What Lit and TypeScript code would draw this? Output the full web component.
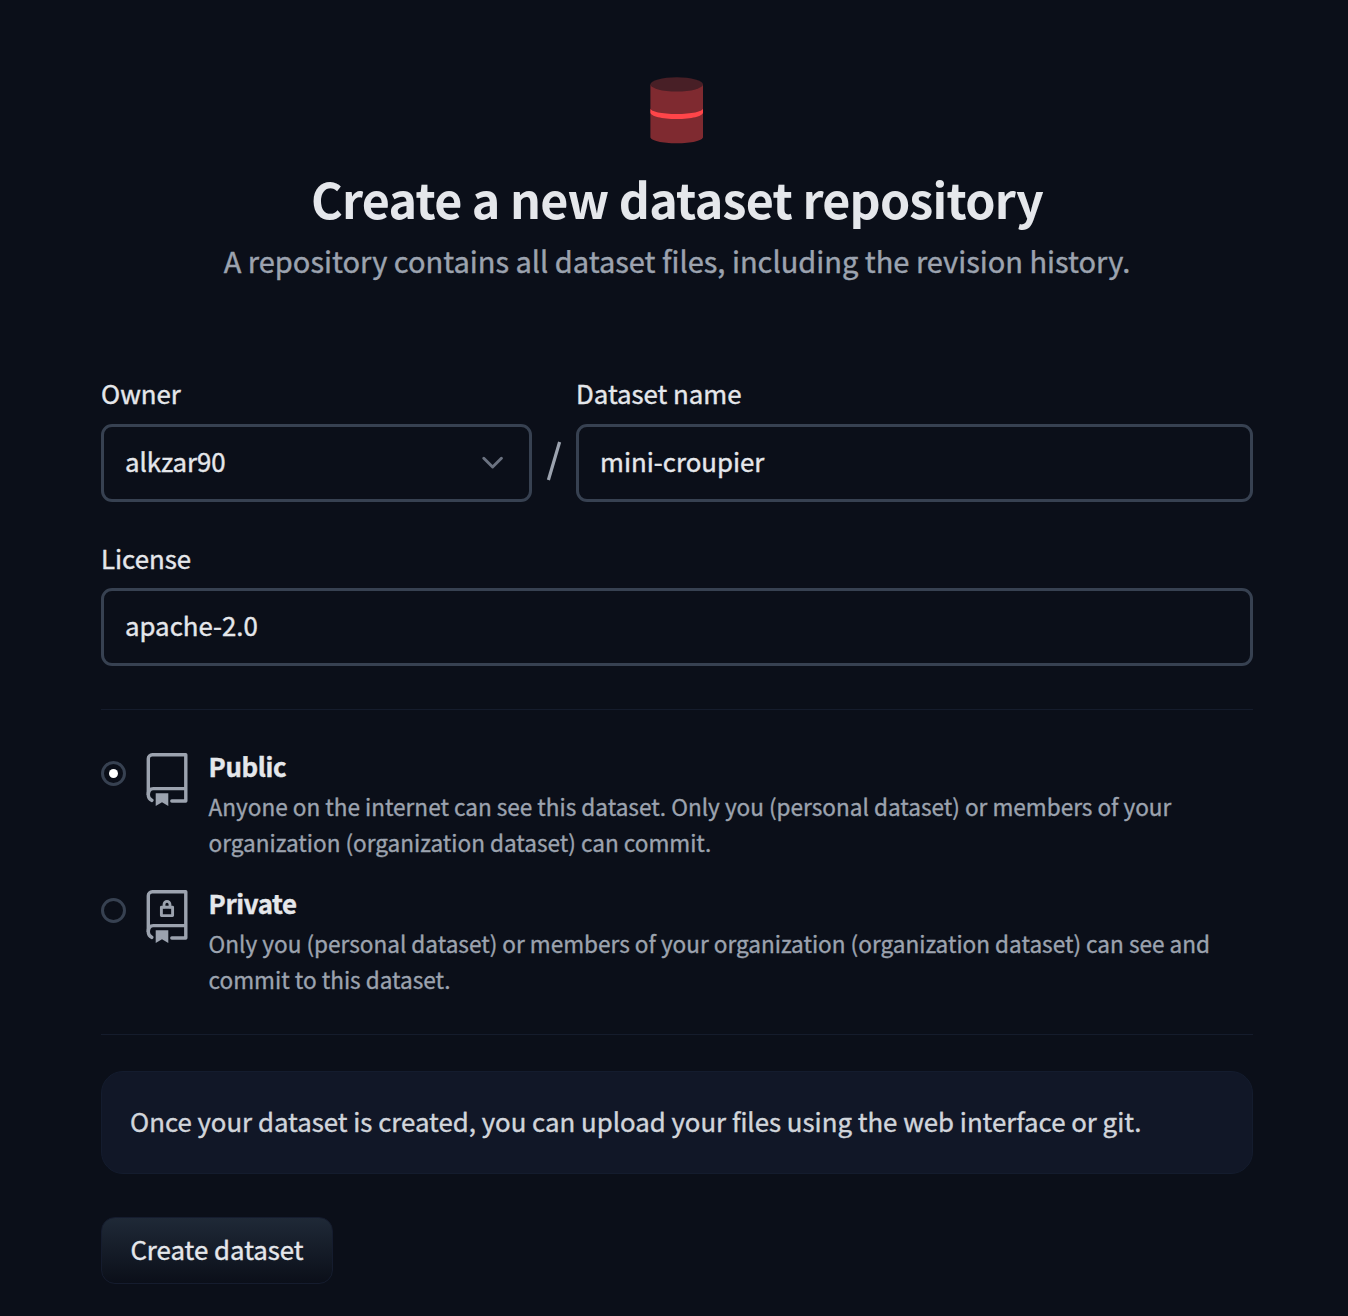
import { LitElement, html, css, svg } from "lit";
import { customElement, property, state } from "lit/decorators.js";

type Visibility = "public" | "private";

const FONT = css`"Source Sans Pro", "Noto Sans CJK SC", "Noto Sans", sans-serif`;

@customElement("repo-icon")
class RepoIcon extends LitElement {
  @property({ type: Boolean }) locked = false;

  static styles = css`
    :host { display: block; width: 42px; height: 54px; color: #9ca3af; }
    .icon { display: block; }
  `;

  render() {
    return html`
      <svg class="icon" width="42" height="54" viewBox="0 0 42 54" fill="none" stroke="currentColor"
        stroke-width="3.4" stroke-linecap="round" stroke-linejoin="round">
        <path d="M5.9 47.4C3.6 46.4 2.3 44.8 2.3 42V5.7a4 4 0 0 1 4-4H39.8V48H25.8" />
        <path d="M2.3 42C2.3 38 4.1 35.6 7.4 35.6H39.8" stroke-linecap="butt" />
        <path d="M9.7 40.3H22.3V53L16 49.3L9.7 53Z" fill="currentColor" stroke="none" />
        ${this.locked
          ? svg`<rect x="15.4" y="17.3" width="11.2" height="8.3" stroke-width="2.9" />
              <path d="M18 17V14.4a3 3 0 0 1 6 0V17" stroke-width="2.8" />`
          : null}
      </svg>
    `;
  }
}

@customElement("visibility-option")
class VisibilityOption extends LitElement {
  @property() heading = "";
  @property({ attribute: false }) lines: string[] = [];
  @property({ type: Boolean }) checked = false;
  @property({ type: Boolean }) locked = false;

  static styles = css`
    :host { display: block; height: 108px; font-family: ${FONT}; cursor: pointer; }
    .row { display: flex; align-items: flex-start; }
    .radio {
      box-sizing: border-box; width: 25px; height: 25px; margin: 8px 20px 0 0; flex: none;
      border: 3px solid #374151; border-radius: 50%; display: grid; place-items: center;
    }
    .dot { width: 9px; height: 9px; border-radius: 50%; background: #fff; }
    .icon { flex: none; margin-right: 20.6px; }
    .text { white-space: nowrap; }
    .heading {
      height: 36px; line-height: 26px; font-size: 25.8px; font-weight: 700; letter-spacing: -0.36px; color: #e5e7eb;
    }
    .line { height: 36px; line-height: 36px; font-size: 22.57px; color: #9ca3af; -webkit-text-stroke: 0.35px; }
  `;

  render() {
    return html`
      <div class="row" role="radio" aria-checked=${this.checked}>
        <div class="radio">${this.checked ? html`<div class="dot"></div>` : null}</div>
        <repo-icon class="icon" ?locked=${this.locked}></repo-icon>
        <div class="text">
          <div class="heading">${this.heading}</div>
          ${this.lines.map((line) => html`<div class="line">${line}</div>`)}
        </div>
      </div>
    `;
  }
}

@customElement("app-root")
class AppRoot extends LitElement {
  @state() private visibility: Visibility = "public";

  static styles = css`
    :host {
      display: block; box-sizing: border-box; height: 1316px; padding: 77px 95px 0 101px; overflow: hidden;
      background: #0b0f19; color: #e5e7eb; font-family: ${FONT}; font-size: 25.8px;
      -webkit-text-stroke: 0.4px;
    }
    .header { display: flex; flex-direction: column; align-items: center; height: 299px; white-space: nowrap; }
    .logo { display: block; }
    .title {
      margin: 18px 0 0; height: 73px; line-height: 72px; font-size: 48.4px; font-weight: 700;
      letter-spacing: -0.73px; -webkit-text-stroke: 0;
    }
    .subtitle { margin: 0; height: 50px; line-height: 50px; font-size: 29.03px; color: #9ca3af; }
    .names { display: grid; grid-template-columns: 431px 44px 677px; height: 165px; }
    .label { display: block; height: 48px; line-height: 33px; }
    .control {
      box-sizing: border-box; height: 78px; padding: 0 25px 0 21px; border: 3px solid #374151;
      border-radius: 11px; display: flex; align-items: center; justify-content: space-between;
    }
    .value { padding-bottom: 5px; }
    .slash { display: flex; justify-content: center; padding: 65px 1px 0 0; }
    .license { height: 168px; }
    .license .label { height: 47px; }
    .divider { height: 1px; background: #151c2c; }
    .options { display: flex; flex-direction: column; gap: 29px; padding: 43px 0 36px; }
    .notice {
      box-sizing: border-box; height: 103px; margin-top: 36px; padding: 0 28px 4px; display: flex; align-items: center;
      border: 1px solid #141c2e; border-radius: 22px; background: #111727; color: #d1d5db; white-space: nowrap;
    }
    .submit {
      box-sizing: border-box; width: 232px; height: 67px; margin-top: 43px; padding: 0 0 4px; border: 1px solid #151c2e;
      border-radius: 14px; background: linear-gradient(#1f2937, #0b0f19); color: #e5e7eb;
      font: inherit; white-space: nowrap;
    }
  `;

  render() {
    return html`
      <header class="header">
        <svg class="logo" width="54" height="67" viewBox="0 0 54 67">
          <path fill="#7f2a30" d="M.4 7.6H53V60C53 63.6 41.3 66.3 26.7 66.3S.4 63.6.4 60Z" />
          <path fill="#0b0f19" d="M0 0H54V7.6H0Z" />
          <ellipse fill="#481f26" cx="26.7" cy="7.4" rx="26.3" ry="7.1" />
          <path fill="#ff4549" d="M.4 31.6C.4 34.6 12.1 37.1 26.7 37.1S53 34.6 53 31.6V35.6C53 39.4 41.3 42.1 26.7 42.1S.4 39.4.4 35.6Z" />
        </svg>
        <h1 class="title">Create a new dataset repository</h1>
        <p class="subtitle">A repository contains all dataset files, including the revision history.</p>
      </header>

      <section class="names">
        <div>
          <label class="label">Owner</label>
          <div class="control">
            <span class="value">alkzar90</span>
            <svg width="22" height="14" viewBox="0 0 22 14" fill="none" stroke="#6b7280" stroke-width="2.9"
              stroke-linecap="round" stroke-linejoin="round"><path d="M1.8 2.2L10.6 11L19.4 2.2" /></svg>
          </div>
        </div>
        <div class="slash">
          <svg width="16" height="40" viewBox="0 0 16 40" stroke="#9ca3af" stroke-width="3.2"><path d="M2.4 39L13.6 1" /></svg>
        </div>
        <div>
          <label class="label">Dataset name</label>
          <div class="control"><span class="value">mini-croupier</span></div>
        </div>
      </section>

      <section class="license">
        <label class="label">License</label>
        <div class="control"><span class="value">apache-2.0</span></div>
      </section>

      <div class="divider"></div>
      <section class="options" role="radiogroup">
        <visibility-option
          heading="Public"
          .lines=${[
            "Anyone on the internet can see this dataset. Only you (personal dataset) or members of your",
            "organization (organization dataset) can commit.",
          ]}
          ?checked=${this.visibility === "public"}
          @click=${() => (this.visibility = "public")}
        ></visibility-option>
        <visibility-option
          heading="Private"
          locked
          .lines=${[
            "Only you (personal dataset) or members of your organization (organization dataset) can see and",
            "commit to this dataset.",
          ]}
          ?checked=${this.visibility === "private"}
          @click=${() => (this.visibility = "private")}
        ></visibility-option>
      </section>
      <div class="divider"></div>

      <div class="notice">Once your dataset is created, you can upload your files using the web interface or git.</div>
      <button class="submit">Create dataset</button>
    `;
  }
}
